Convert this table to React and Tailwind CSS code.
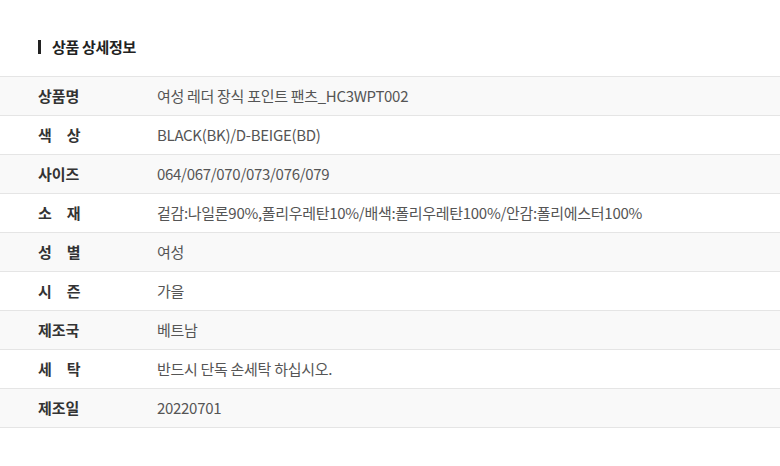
const ROWS = [
  { label: '상품명', value: '여성 레더 장식 포인트 팬츠_HC3WPT002' },
  { label: '색　상', value: 'BLACK(BK)/D-BEIGE(BD)' },
  { label: '사이즈', value: '064/067/070/073/076/079' },
  { label: '소　재', value: '겉감:나일론90%,폴리우레탄10%/배색:폴리우레탄100%/안감:폴리에스터100%' },
  { label: '성　별', value: '여성' },
  { label: '시　즌', value: '가을' },
  { label: '제조국', value: '베트남' },
  { label: '세　탁', value: '반드시 단독 손세탁 하십시오.' },
  { label: '제조일', value: '20220701' },
]

export default function App() {
  return (
    <div className="w-[780px] h-[466px] bg-white" style={{ fontFamily: '"Noto Sans CJK KR", "Noto Sans", sans-serif' }}>
      <div className="pt-[37px] pl-[38px] flex items-center gap-[11px] h-[56px]">
        <span className="w-[3px] h-[14px] bg-[#222]" />
        <h2 className="text-[15px] font-bold text-[#222] leading-[20px] tracking-[-0.3px]">상품 상세정보</h2>
      </div>
      <div className="mt-[20px] border-t border-[#e5e5e5]">
        {ROWS.map((row, i) => (
          <div key={row.label} className={`flex items-center h-[39px] border-b border-[#e5e5e5] ${i % 2 === 0 ? 'bg-[#f9f9f9]' : 'bg-white'}`}>
            <div className="w-[157px] pl-[38px] text-[15px] font-bold text-[#333] whitespace-pre">{row.label}</div>
            <div className="text-[15px] text-[#555] tracking-[-0.3px]">{row.value}</div>
          </div>
        ))}
      </div>
    </div>
  )
}
